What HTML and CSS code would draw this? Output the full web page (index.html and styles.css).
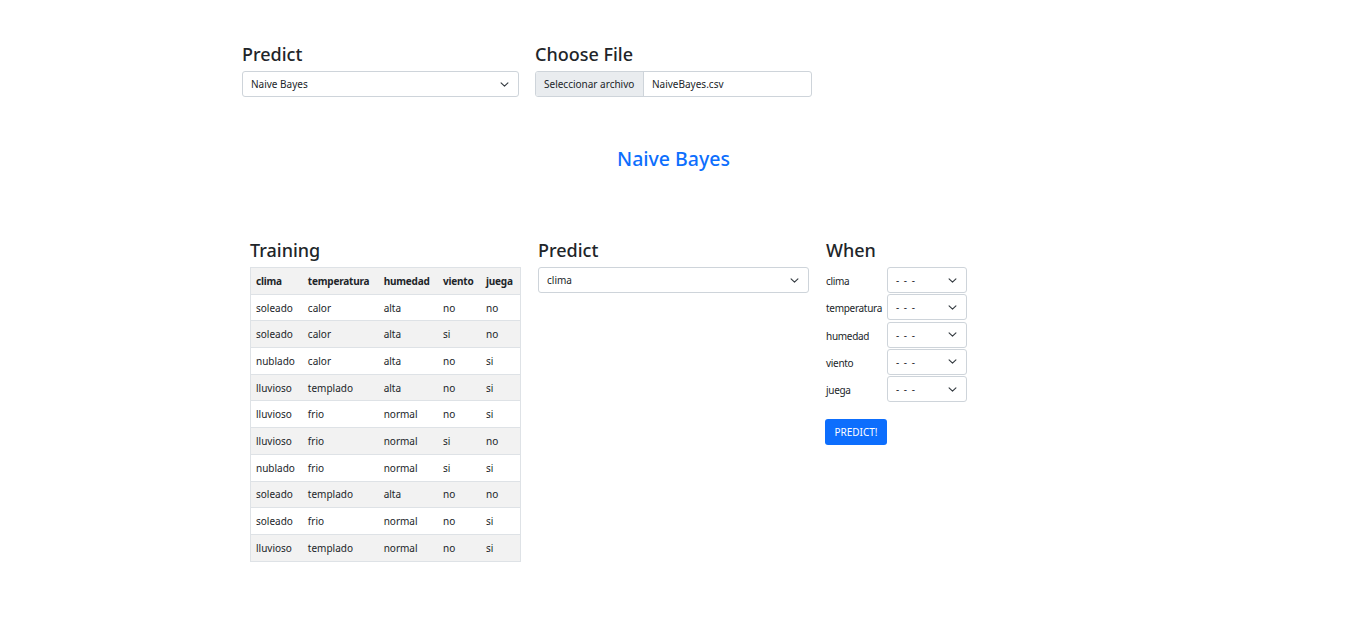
FILE: index.html
```html
<!DOCTYPE html>
<html lang="es">
<head>
<meta charset="utf-8">
<title>Naive Bayes</title>
<link rel="stylesheet" href="styles.css">
</head>
<body>
<div class="page">
  <div class="top-row">
    <div class="top-col">
      <h5 class="heading">Predict</h5>
      <div class="select"><span>Naive Bayes</span><svg class="chev" viewBox="0 0 16 16"><path d="M3 5.5l5 5 5-5" fill="none" stroke="#343a40" stroke-width="1.6" stroke-linecap="round" stroke-linejoin="round"/></svg></div>
    </div>
    <div class="top-col">
      <h5 class="heading">Choose File</h5>
      <div class="file"><span class="file-btn">Seleccionar archivo</span><span class="file-name">NaiveBayes.csv</span></div>
    </div>
  </div>

  <h4 class="title">Naive Bayes</h4>

  <div class="bottom-row">
    <div class="col">
      <h5 class="heading">Training</h5>
      <table class="train">
        <thead>
          <tr><th>clima</th><th>temperatura</th><th>humedad</th><th>viento</th><th>juega</th></tr>
        </thead>
        <tbody>
          <tr><td>soleado</td><td>calor</td><td>alta</td><td>no</td><td>no</td></tr>
          <tr><td>soleado</td><td>calor</td><td>alta</td><td>si</td><td>no</td></tr>
          <tr><td>nublado</td><td>calor</td><td>alta</td><td>no</td><td>si</td></tr>
          <tr><td>lluvioso</td><td>templado</td><td>alta</td><td>no</td><td>si</td></tr>
          <tr><td>lluvioso</td><td>frio</td><td>normal</td><td>no</td><td>si</td></tr>
          <tr><td>lluvioso</td><td>frio</td><td>normal</td><td>si</td><td>no</td></tr>
          <tr><td>nublado</td><td>frio</td><td>normal</td><td>si</td><td>si</td></tr>
          <tr><td>soleado</td><td>templado</td><td>alta</td><td>no</td><td>no</td></tr>
          <tr><td>soleado</td><td>frio</td><td>normal</td><td>no</td><td>si</td></tr>
          <tr><td>lluvioso</td><td>templado</td><td>normal</td><td>no</td><td>si</td></tr>
        </tbody>
      </table>
    </div>
    <div class="col">
      <h5 class="heading">Predict</h5>
      <div class="select"><span>clima</span><svg class="chev" viewBox="0 0 16 16"><path d="M3 5.5l5 5 5-5" fill="none" stroke="#343a40" stroke-width="1.6" stroke-linecap="round" stroke-linejoin="round"/></svg></div>
    </div>
    <div class="col">
      <h5 class="heading">When</h5>
      <div class="when">
        <div class="when-row"><span class="lbl">clima</span><div class="select small"><span class="dash">- - -</span><svg class="chev" viewBox="0 0 16 16"><path d="M3 5.5l5 5 5-5" fill="none" stroke="#343a40" stroke-width="1.6" stroke-linecap="round" stroke-linejoin="round"/></svg></div></div>
        <div class="when-row"><span class="lbl">temperatura</span><div class="select small"><span class="dash">- - -</span><svg class="chev" viewBox="0 0 16 16"><path d="M3 5.5l5 5 5-5" fill="none" stroke="#343a40" stroke-width="1.6" stroke-linecap="round" stroke-linejoin="round"/></svg></div></div>
        <div class="when-row"><span class="lbl">humedad</span><div class="select small"><span class="dash">- - -</span><svg class="chev" viewBox="0 0 16 16"><path d="M3 5.5l5 5 5-5" fill="none" stroke="#343a40" stroke-width="1.6" stroke-linecap="round" stroke-linejoin="round"/></svg></div></div>
        <div class="when-row"><span class="lbl">viento</span><div class="select small"><span class="dash">- - -</span><svg class="chev" viewBox="0 0 16 16"><path d="M3 5.5l5 5 5-5" fill="none" stroke="#343a40" stroke-width="1.6" stroke-linecap="round" stroke-linejoin="round"/></svg></div></div>
        <div class="when-row"><span class="lbl">juega</span><div class="select small"><span class="dash">- - -</span><svg class="chev" viewBox="0 0 16 16"><path d="M3 5.5l5 5 5-5" fill="none" stroke="#343a40" stroke-width="1.6" stroke-linecap="round" stroke-linejoin="round"/></svg></div></div>
      </div>
      <button class="btn">PREDICT!</button>
    </div>
  </div>
</div>
</body>
</html>
```

FILE: styles.css
```css
* { box-sizing: border-box; }
body {
  margin: 0;
  font-family: "Noto Sans", "Open Sans", sans-serif;
  color: #212529;
  background: #fff;
}
.page {
  width: 1347px;
  padding-top: 42px;
}
.top-row {
  display: flex;
  gap: 16px;
  padding-left: 242px;
}
.top-col { width: 277px; }
.heading {
  margin: 0 0 4px 0;
  font-size: 18px;
  font-weight: 500;
  line-height: 25px;
  color: #212529;
}
.select {
  height: 26px;
  border: 1px solid #ced4da;
  border-radius: 3px;
  display: flex;
  align-items: center;
  justify-content: space-between;
  padding: 0 8px 0 8px;
  font-size: 10px;
  color: #212529;
  background: #fff;
}
.chev { width: 11px; height: 11px; }
.file {
  height: 26px;
  border: 1px solid #ced4da;
  border-radius: 3px;
  display: flex;
  font-size: 10px;
  overflow: hidden;
  white-space: nowrap;
}
.file-btn {
  background: #e9ecef;
  border-right: 1px solid #ced4da;
  padding: 0 0 0 8px;
  display: flex;
  align-items: center;
  width: 108px;
  flex: none;
}
.file-name {
  padding: 0 8px;
  display: flex;
  align-items: center;
}
.title {
  margin: 0;
  padding-top: 48px;
  text-align: center;
  font-size: 19.5px;
  font-weight: 500;
  line-height: 28px;
  color: #0d6efd;
}
.bottom-row {
  display: flex;
  gap: 17px;
  padding-left: 250px;
  padding-top: 65px;
}
.col { width: 271px; }
.bottom-row .heading { margin-bottom: 4px; }
.train {
  width: 271px;
  border-collapse: collapse;
  font-size: 10px;
  border: 1px solid #dee2e6;
}
.train th, .train td {
  text-align: left;
  padding: 0 5px;
  height: 26.7px;
  border-bottom: 1px solid #dee2e6;
  white-space: nowrap;
}
.train th { font-weight: 700; background: #f2f2f2; letter-spacing: -0.2px; }
.train tbody tr:nth-child(even) td { background: #f2f2f2; }
.when { display: flex; flex-direction: column; gap: 1.3px; margin-top: 1px; }
.when-row { display: flex; align-items: center; height: 26px; }
.lbl { width: 61px; font-size: 10px; white-space: nowrap; letter-spacing: -0.3px; padding-top: 2px; }
.select.small { width: 80px; padding: 0 8px; flex: none; }
.dash { letter-spacing: 1px; }
.btn {
  margin-top: 17px;
  background: #0d6efd;
  color: #fff;
  border: none;
  border-radius: 3px;
  height: 26px;
  width: 62px;
  padding: 0;
  font-family: inherit;
  font-size: 10px;
  margin-left: -1px;
}
```
